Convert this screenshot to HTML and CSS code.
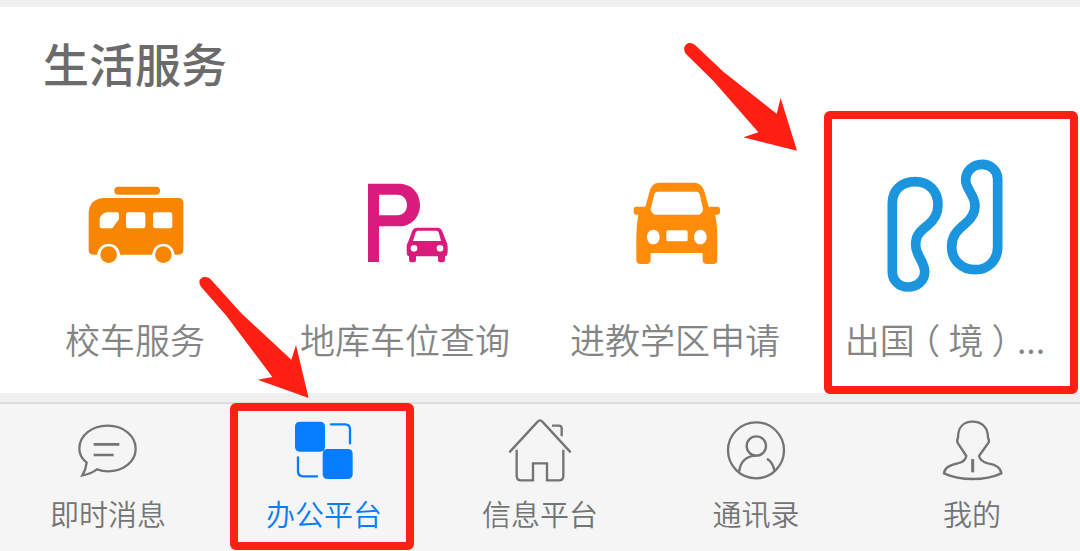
FILE: index.html
```html
<!DOCTYPE html>
<html lang="zh-CN">
<head>
    <meta charset="UTF-8">
    <meta name="viewport" content="width=device-width, initial-scale=1.0">
    <title>办公平台</title>
    <link rel="stylesheet" href="styles.css">
</head>
<body>
    <main class="services">
        <h2>生活服务</h2>
        <div class="service-grid">
            <a href="#" class="service">
                <span class="service-icon">
                    <svg width="100" height="90" viewBox="45 30 300 270" fill="#f98600">
                        <rect x="133" y="50" width="137" height="24" rx="12"/>
                        <path fill-rule="evenodd" d="M100 84H325Q340 84 340 99V240Q340 254 326 254H314C308 210 252 210 246 254H151C145 210 87 210 81 254H70Q56 254 56 240V128Q58 88 100 84ZM109 127Q89 132 89 152V169Q89 175 95 175H127L147 147V133Q147 127 141 127ZM175 127Q168 127 168 134V168Q168 175 175 175H219Q226 175 226 168V134Q226 127 219 127ZM256 127Q249 127 249 134V168Q249 175 256 175H300Q307 175 307 168V134Q307 127 300 127Z"/>
                        <circle cx="116" cy="254" r="25"/>
                        <circle cx="280" cy="254" r="25"/>
                    </svg>
                </span>
                <span class="service-name">校车服务</span>
            </a>
            <a href="#" class="service">
                <span class="service-icon">
                    <svg width="100" height="90" viewBox="15 30 300 270" fill="#d91b7c">
                        <path fill-rule="evenodd" d="M54 41H147C185 41 210 69 210 105S185 169 147 169H87V276H54ZM87 74V136H142C160 136 171 122 171 105S160 74 142 74Z"/>
                        <path fill-rule="evenodd" d="M202 173H262Q272 173 276 182L290 217Q293 222 293 230V246Q293 258 285 259V270Q285 277 278 277H270Q264 277 264 270V259H198V270Q198 277 192 277H184Q177 277 177 270V259Q170 258 170 246V230Q170 222 174 217L187 182Q191 173 202 173ZM204 182Q199 182 197 187L189 213H273L266 187Q264 182 260 182ZM192 225A10 10 0 1 0 192 245A10 10 0 1 0 192 225ZM270 225A10 10 0 1 0 270 245A10 10 0 1 0 270 225Z"/>
                    </svg>
                </span>
                <span class="service-name">地库车位查询</span>
            </a>
            <a href="#" class="service">
                <span class="service-icon">
                    <svg width="100" height="90" viewBox="15 30 300 270" fill="#ff8c0a">
                        <path fill-rule="evenodd" d="M115 38H224Q246 40 253 64L266 110H293Q300 110 300 117V127Q300 134 293 134H286Q291 160 292 195V269Q292 282 279 282H261Q248 282 248 269V249H92V269Q92 282 79 282H62Q49 282 49 269V195Q50 160 55 134H48Q41 134 41 127V117Q41 110 48 110H76L89 64Q95 40 115 38ZM112 65Q105 65 103 73L92 116Q92 127 104 134H238Q249 127 249 116L239 73Q237 65 230 65ZM100 179C88 179 81 190 81 201S88 223 100 223S119 212 119 201S112 179 100 179ZM241 179C229 179 222 190 222 201S229 223 241 223S260 212 260 201S253 179 241 179ZM144 181Q139 181 139 186V209Q139 214 144 214H198Q203 214 203 209V186Q203 181 198 181Z"/>
                    </svg>
                </span>
                <span class="service-name">进教学区申请</span>
            </a>
            <a href="#" class="service">
                <span class="service-icon">
                    <svg width="120" height="140" viewBox="195 150 360 420" fill="none" stroke="#1b95dd" stroke-width="29">
                        <path d="M217 294C217 256 245 230 285 230C327 230 354 259 354 300C354 325 341 347 322 362C292 385 287 397 287 421C287 451 314 469 314 500C314 526 292 546 264 546C237 546 217 526 217 500Z"/>
                        <path d="M533 222C533 197 512 178 486 178C458 178 437 199 437 226C437 252 465 270 465 302C465 324 455 340 436 356C408 379 395 396 395 425C395 466 425 494 465 494C505 494 533 466 533 425Z"/>
                    </svg>
                </span>
                <span class="service-name">出国<span class="bracket">（</span>境<span class="bracket">）</span>...</span>
                <span class="frame frame-service"></span>
                <svg class="arrow arrow-service" width="150" height="140" viewBox="0 0 450 420">
                    <path d="M48 72C36 57 45 39 60 39Q68 39 76 46L161 126L320 251L332 204L381 362L220 322L265 307L131 154Z"/>
                </svg>
            </a>
        </div>
    </main>

    <nav class="tabbar">
        <a href="#" class="tab">
            <svg width="64" height="64" viewBox="48 57 192 192">
                <path d="M80 188C66 176 58 162 58 146C58 106 96 77 143 77S227 107 227 146S190 214 143 214Q127 214 111 208Q92 222 67 226Q78 208 80 188Z"/>
                <path d="M101 133H178M101 165H161" stroke-width="8"/>
            </svg>
            <span>即时消息</span>
        </a>
        <a href="#" class="tab active">
            <svg width="64" height="64" viewBox="201 72 192 192">
                <rect class="solid" x="210" y="80" width="90" height="90" rx="14"/>
                <rect class="solid" x="293" y="162" width="90" height="90" rx="14"/>
                <path d="M318 88H360Q375 88 375 103V145M219 187V229Q219 244 234 244H276" stroke-linecap="round"/>
            </svg>
            <span>办公平台</span>
            <span class="frame frame-tab"></span>
            <svg class="arrow arrow-tab" width="140" height="150" viewBox="0 0 420 450">
                <path d="M33 65C22 49 31 36 46 36Q55 36 62 43L154 145L304 284L318 240L356 399L203 344L247 336L109 152Z"/>
            </svg>
        </a>
        <a href="#" class="tab">
            <svg width="64" height="64" viewBox="54 57 192 192">
                <path d="M58 157L143 65Q150 57 157 65L242 157M80 149V228Q80 241 93 241H129V190H171V241H207Q220 241 220 228V149M186 77H207Q215 77 215 85V109"/>
            </svg>
            <span>信息平台</span>
        </a>
        <a href="#" class="tab">
            <svg width="64" height="64" viewBox="72 57 192 192">
                <circle cx="168" cy="151" r="84"/>
                <circle cx="169" cy="138" r="29"/>
                <path d="M118 214C120 185 140 167 169 167M201 176Q220 188 223 212"/>
            </svg>
            <span>通讯录</span>
        </a>
        <a href="#" class="tab">
            <svg width="64" height="64" viewBox="30 102 192 192">
                <path d="M109 213L84 175Q79 169 84 158C84 127 101 110 128 110S174 127 174 158Q180 169 174 175L147 213Q151 230 174 235C202 240 213 251 214 265Q177 282 128 282T42 265C43 251 57 240 83 235Q106 230 109 213Z"/>
                <path d="M128 222V262" stroke-width="9"/>
            </svg>
            <span>我的</span>
        </a>
    </nav>
</body>
</html>
```
FILE: styles.css
```css
* {
    box-sizing: border-box;
}

body {
    margin: 0;
    font-family: "Noto Sans CJK SC", sans-serif;
    background: #f0f0f0;
    overflow-x: hidden;
}

a {
    color: inherit;
    text-decoration: none;
}

svg {
    display: block;
}

.services {
    margin: 7px 0 9px;
    padding: 25px 0 30px;
    background: #fff;
}

.services h2 {
    margin: 0 0 63px;
    padding-left: 43px;
    font-size: 46px;
    line-height: 60px;
    font-weight: 500;
    color: #6b6b6b;
}

.service-grid {
    display: grid;
    grid-template-columns: repeat(4, 1fr);
}

.service {
    position: relative;
    display: flex;
    flex-direction: column;
    align-items: center;
    gap: 20px;
}

.service-icon {
    display: flex;
    align-items: center;
    height: 140px;
}

.service-name {
    font-size: 35px;
    line-height: 48px;
    font-weight: 350;
    color: #858585;
    white-space: nowrap;
}

/* 半宽括号，两侧留白居中 */
.bracket {
    padding: 0 8px;
    font-feature-settings: "halt";
}

.tabbar {
    display: grid;
    grid-template-columns: repeat(5, 1fr);
    border-top: 2px solid #dcdcdc;
    background: #f5f5f5;
}

.tab {
    position: relative;
    display: flex;
    flex-direction: column;
    align-items: center;
    gap: 10px;
    padding: 15px 0 18px;
    font-size: 29px;
    line-height: 40px;
    font-weight: 350;
    color: #747474;
}

.tab svg {
    fill: none;
    stroke: currentColor;
    stroke-width: 7;
}

.tab.active {
    color: #067dff;
}

.tab .solid {
    fill: currentColor;
    stroke: none;
}

/* 页面上的红色标注 */
.frame {
    position: absolute;
    border: 8px solid #ff2013;
    border-radius: 6px;
}

.frame-service {
    inset: -44px 2px -31px 14px;
}

.frame-tab {
    inset: -1px 18px 1px 14px;
}

.arrow,
.tab .arrow {
    position: absolute;
    z-index: 1;
    fill: #ff2013;
    stroke: none;
}

.arrow-service {
    top: -125px;
    left: -140px;
}

.arrow-tab {
    top: -139px;
    left: -26px;
}
```
